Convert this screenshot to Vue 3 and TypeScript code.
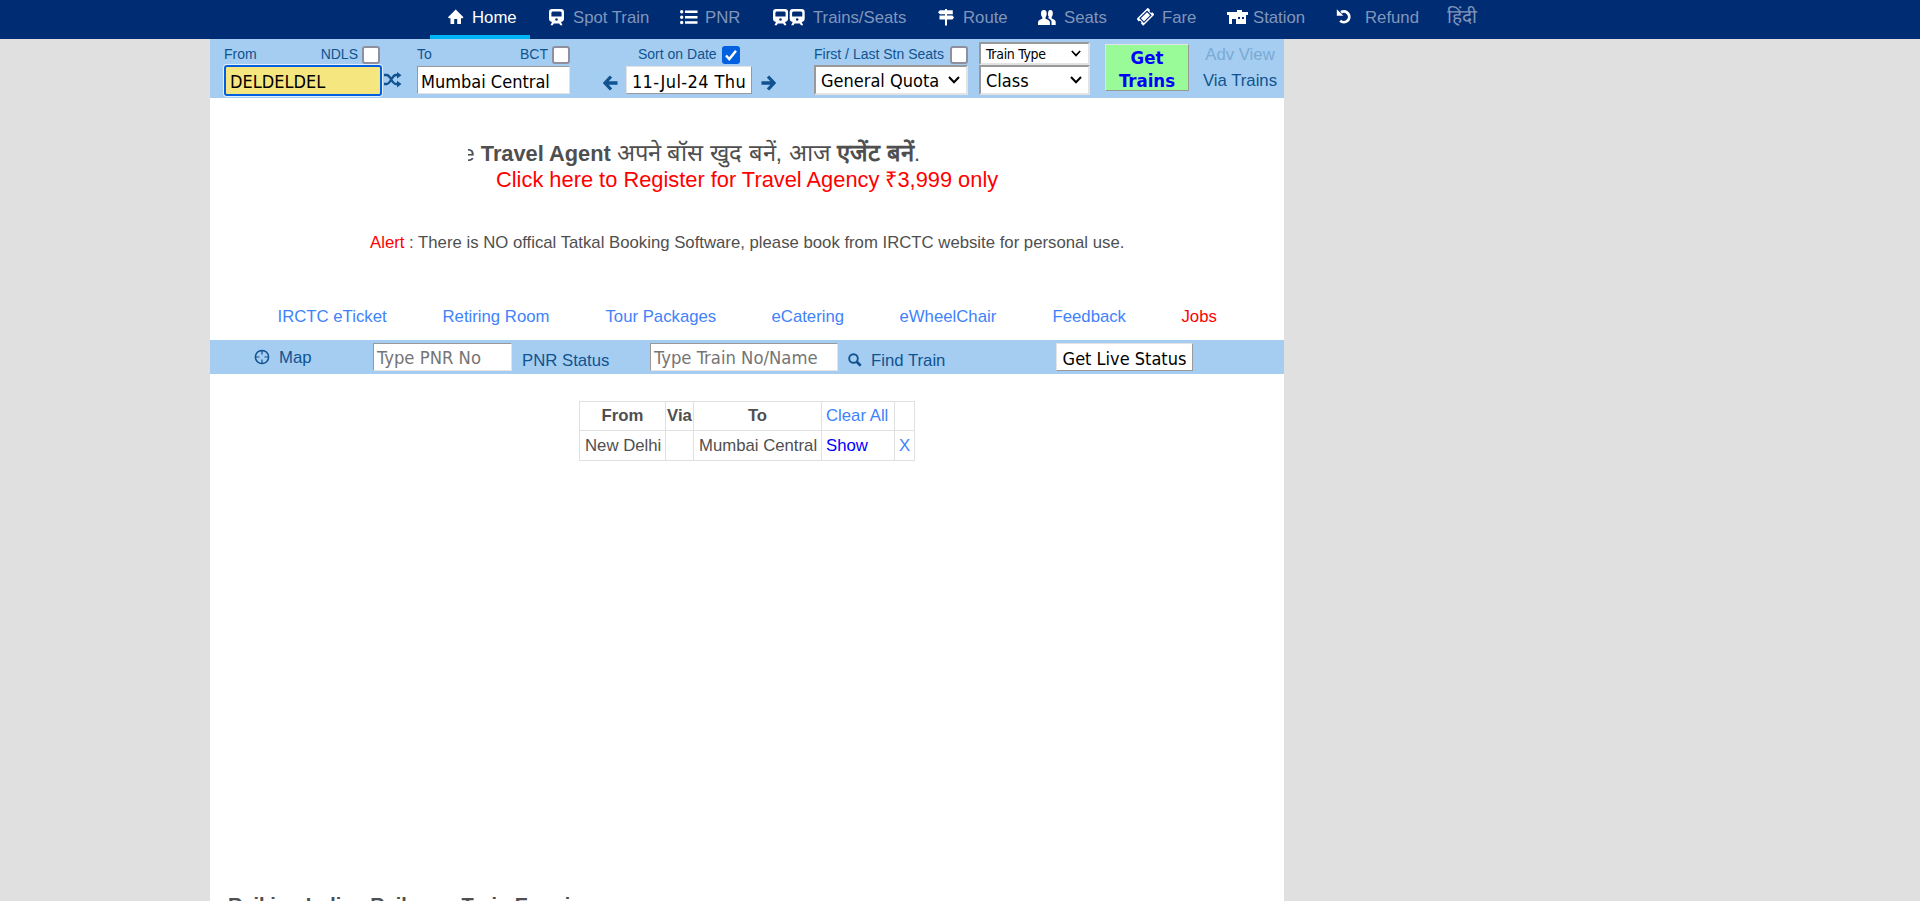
<script setup lang="ts">
interface NavItem { label: string; icon: string; w: number; iw: number; gap: number }

const nav: NavItem[] = [
  { label: 'Home', icon: 'home', w: 101, iw: 16, gap: 8 },
  { label: 'Spot Train', icon: 'train', w: 131, iw: 16, gap: 8 },
  { label: 'PNR', icon: 'list', w: 93, iw: 18, gap: 7 },
  { label: 'Trains/Seats', icon: 'trains', w: 165, iw: 32, gap: 8 },
  { label: 'Route', icon: 'sign', w: 100, iw: 16, gap: 9 },
  { label: 'Seats', icon: 'users', w: 99, iw: 18, gap: 8 },
  { label: 'Fare', icon: 'ticket', w: 90, iw: 17, gap: 8 },
  { label: 'Station', icon: 'station', w: 109, iw: 21, gap: 5 },
  { label: 'Refund', icon: 'undo', w: 111, iw: 16, gap: 13 },
  { label: 'हिंदी', icon: '', w: 70, iw: 0, gap: 0 },
]
const links: { label: string; w: number }[] = [
  { label: 'IRCTC eTicket', w: 165 },
  { label: 'Retiring Room', w: 163 },
  { label: 'Tour Packages', w: 166 },
  { label: 'eCatering', w: 128 },
  { label: 'eWheelChair', w: 153 },
  { label: 'Feedback', w: 129 },
  { label: 'Jobs', w: 60 },
]
</script>

<template>
  <div class="page">
    <nav class="nav">
      <a v-for="(n, i) in nav" :key="n.label" class="nav-item" :class="{ active: i === 0, hindi: !n.icon }" :style="{ width: n.w + 'px' }">
        <svg v-if="n.icon" class="nav-icon" :style="{ width: n.iw + 'px', marginRight: n.gap + 'px' }" :viewBox="`0 0 ${n.iw} 18`" height="18">
          <path v-if="n.icon === 'home'" d="M7.7 1.5 15.5 9.2 14.5 10.3H13V16H9.2V11H6.2V16H2.5V10.3H.9L0 9.2Z" />
          <g v-if="n.icon === 'train' || n.icon === 'trains'">
            <path fill-rule="evenodd" d="M3 1H12Q15 1 15 4V10.5Q15 13.5 12 14L13.5 17.2H11.2L10.2 15.5H4.8L3.8 17.2H1.5L3 14Q0 13.5 0 10.5V4Q0 1 3 1ZM3.5 3.5 2.4 4.5V8.5H12.6V4.5L11.5 3.5ZM7.5 10.2A1.3 1.3 0 1 0 7.5 12.8A1.3 1.3 0 1 0 7.5 10.2Z" />
            <path v-if="n.icon === 'trains'" transform="translate(16.7 0)" fill-rule="evenodd" d="M3 1H12Q15 1 15 4V10.5Q15 13.5 12 14L13.5 17.2H11.2L10.2 15.5H4.8L3.8 17.2H1.5L3 14Q0 13.5 0 10.5V4Q0 1 3 1ZM3.5 3.5 2.4 4.5V8.5H12.6V4.5L11.5 3.5ZM7.5 10.2A1.3 1.3 0 1 0 7.5 12.8A1.3 1.3 0 1 0 7.5 10.2Z" />
          </g>
          <path v-if="n.icon === 'list'" d="M0 3.7a1.7 1.7 0 1 0 3.4 0a1.7 1.7 0 1 0-3.4 0M0 9.2a1.7 1.7 0 1 0 3.4 0a1.7 1.7 0 1 0-3.4 0M0 14.5a1.7 1.7 0 1 0 3.4 0a1.7 1.7 0 1 0-3.4 0M5 2.4H17.5V5H5ZM5 8H17.5V10.5H5ZM5 13.3H17.5V15.8H5Z" />
          <path v-if="n.icon === 'sign'" d="M7 1H9V2.2H14.8V6.2H9V7.4H14.5L16 9.4 14.5 11.5H9V17.5H7V11.5H1.5V7.4H7V6.2H1.8L0 4.2 1.8 2.2H7Z" />
          <g v-if="n.icon === 'users'">
            <path d="M5.8 2C8 2 8.8 3.5 8.7 5.7 8.6 7.8 7.9 8.7 7.5 9.4V10.8C9.3 11.6 11.6 12.3 11.9 14V17H0V14C.2 12.3 2.5 11.6 4.3 10.8V9.4C3.8 8.7 3 7.8 3 5.7 3 3.5 3.6 2 5.8 2Z" />
            <path d="M12.3 2C14.4 2 14.9 3.6 14.8 5.6 14.7 7.8 14 8.5 13.6 9.3V10.6C15.3 11.4 17.5 12 17.7 13.8V17H13.5V13.5C13.2 11.8 11.5 11 10.3 10.3 10 9.7 10.8 9 10.9 8.7 10.2 8.2 9.8 7.2 10 5.8 10.1 4 10.3 2 12.3 2Z" />
          </g>
          <g v-if="n.icon === 'ticket'" transform="rotate(-45 8.5 8.8)">
            <path fill-rule="evenodd" d="M.5 4H16.5V7.3A1.5 1.5 0 0 0 16.5 10.3V13.6H.5V10.3A1.5 1.5 0 0 0 .5 7.3ZM3 5.5V12.1H14V5.5ZM4.2 6.6H12.8V11H4.2Z" />
          </g>
          <g v-if="n.icon === 'station'">
            <path d="M10 2H15V4H21V7H0V4H10Z" />
            <path fill-rule="evenodd" d="M2 6H19V16H9V11H5V16H2ZM11 9V11H13V9ZM15 9V11H17V9Z" />
          </g>
          <g v-if="n.icon === 'undo'">
            <path d="M5 4.2A5.4 5.4 0 1 1 4.2 12.8" fill="none" stroke="#fff" stroke-width="2.8" />
            <path d="M.8 1.3V7.7H7.4Z" />
          </g>
        </svg>
        <span>{{ n.label }}</span>
      </a>
    </nav>

    <main class="panel">
      <section class="search">
        <div class="col from">
          <div class="lab"><span>From</span><span class="push">NDLS</span><i class="cb" /></div>
          <div class="field focused">DELDELDEL</div>
        </div>
        <svg class="shuffle" width="18" height="16" viewBox="0 0 18 16"><path d="M0 3H2.5C7 3 7.5 12 12 12H14M0 12H2.5C7 12 7.5 3 12 3H14" fill="none" stroke="#105390" stroke-width="2.4" /><path d="M13 0 17.5 3.2 13 6.5ZM13 8.8 17.5 12.1 13 15.5Z" fill="#105390" /></svg>
        <div class="col to">
          <div class="lab"><span>To</span><span class="push">BCT</span><i class="cb" /></div>
          <div class="field">Mumbai Central</div>
        </div>
        <div class="col date">
          <div class="lab centred"><span>Sort on Date</span><i class="cb on"><svg width="18" height="18" viewBox="0 0 18 18"><path d="M4 9.5 7.3 13 14 4.8" fill="none" stroke="#fff" stroke-width="2.5" /></svg></i></div>
          <div class="daterow">
            <svg width="15" height="16" viewBox="0 0 15 16"><path d="M8 1.5 2 8 8 14.5M2 8H14.5" fill="none" stroke="#105390" stroke-width="3.3" /></svg>
            <div class="field btn datebtn">11-Jul-24 Thu</div>
            <svg width="15" height="16" viewBox="0 0 15 16"><path d="M7 1.5 13 8 7 14.5M13 8H.5" fill="none" stroke="#105390" stroke-width="3.3" /></svg>
          </div>
        </div>
        <div class="col quota">
          <div class="lab"><span>First / Last Stn Seats</span><i class="cb push" /></div>
          <div class="select"><span>General Quota</span><svg width="12" height="8" viewBox="0 0 12 8"><path d="M1 1 6 6.3 11 1" fill="none" stroke="#000" stroke-width="2" /></svg></div>
        </div>
        <div class="col types">
          <div class="select small"><span>Train Type</span><svg width="10" height="7" viewBox="0 0 12 8"><path d="M1 1 6 6.3 11 1" fill="none" stroke="#000" stroke-width="2" /></svg></div>
          <div class="select"><span>Class</span><svg width="12" height="8" viewBox="0 0 12 8"><path d="M1 1 6 6.3 11 1" fill="none" stroke="#000" stroke-width="2" /></svg></div>
        </div>
        <div class="get"><span>Get</span><span>Trains</span></div>
        <div class="views"><span class="dim">Adv View</span><span>Via Trains</span></div>
      </section>

      <section class="promo">
        <div class="marquee"><span>e <b>Travel Agent</b> <span class="hi">अपने बॉस खुद बनें, आज <b>एजेंट बनें</b></span>.</span></div>
        <div class="register">Click here to Register for Travel Agency ₹3,999 only</div>
      </section>

      <p class="alert"><span class="red">Alert</span> : There is NO offical Tatkal Booking Software, please book from IRCTC website for personal use.</p>

      <div class="links">
        <a v-for="l in links" :key="l.label" :style="{ width: l.w + 'px' }" :class="{ red: l.label === 'Jobs' }">{{ l.label }}</a>
      </div>

      <section class="strip">
        <svg class="compass" width="16" height="16" viewBox="0 0 16 16"><circle cx="8" cy="8" r="6.6" fill="none" stroke="#105390" stroke-width="1.5" /><path d="M8 1V5.5M8 10.5V15M1 8H5.5M10.5 8H15" stroke="#105390" stroke-width="1.2" /></svg>
        <span class="map">Map</span>
        <div class="field ph pnr">Type PNR No</div>
        <span class="pnr-status">PNR Status</span>
        <div class="field ph trainno">Type Train No/Name</div>
        <svg class="mag" width="14" height="14" viewBox="0 0 14 14"><circle cx="5.5" cy="5.5" r="4.3" fill="none" stroke="#105390" stroke-width="1.9" /><path d="M8.5 8.5 12.7 12.7" stroke="#105390" stroke-width="2.7" /></svg>
        <span class="find">Find Train</span>
        <div class="field btn live">Get Live Status</div>
      </section>

      <table class="recent">
        <colgroup><col class="c1"><col class="c2"><col class="c3"><col class="c4"><col class="c5"></colgroup>
        <tbody>
          <tr><th>From</th><th>Via</th><th>To</th><td class="link">Clear All</td><td /></tr>
          <tr><td>New Delhi</td><td /><td>Mumbai Central</td><td class="show">Show</td><td class="link">X</td></tr>
        </tbody>
      </table>

      <h2 class="heading">Raiking Indian Railways Train Enquiry</h2>
    </main>
  </div>
</template>

<style>
html, body { margin: 0; overflow: hidden; }
</style>

<style scoped>
.page { height: 901px; overflow: hidden; background: #e0e0e0; font-family: "Liberation Sans", Arial, sans-serif; font-size: 16.74px; color: #4f4f4f; box-sizing: border-box; }
.nav { display: flex; height: 39px; background: #002c74; padding-left: 430px; box-sizing: border-box; }
.nav-item { display: flex; box-sizing: border-box; flex: none; padding-left: 18px; height: 39px; color: #8096ba; line-height: 36px; white-space: nowrap; }
.nav-item.active { color: #fff; background: linear-gradient(#00b3f5, #00b3f5) 0 35px / 100px 4px no-repeat; }
.nav-item.hindi { font-size: 19px; line-height: 34px; padding-left: 18px; }
.nav-icon { flex: none; margin-top: 8px; fill: #fff; }
.panel { display: flex; flex-direction: column; width: 1074px; height: 862px; margin-left: 210px; background: #fff; overflow: hidden; }
.search { display: flex; flex: none; height: 59px; background: #a4cdf1; color: #105390; padding-left: 14px; }
.col { flex: none; display: flex; flex-direction: column; }
.lab { display: flex; align-items: center; height: 18px; margin-top: 7px; margin-bottom: 2px; font-size: 14px; line-height: 18px; white-space: nowrap; }
.lab > span { margin-top: -2px; }
.push { margin-left: auto; }
.cb { flex: none; box-sizing: border-box; width: 18px; height: 18px; margin-left: 4px; border: 2px solid #8f8f9d; border-radius: 3px; background: #fff; }
.cb.push { margin-left: auto; }
.cb.on { border: 0; background: #0060df; margin-left: 5px; }
.cb svg { display: block; }
.field { box-sizing: border-box; height: 28px; padding-left: 3px; border: 1px solid #999; border-right-color: #e3e3e3; border-bottom-color: #e3e3e3; background: #fff; color: #000; font: 18px/29px "DejaVu Sans Condensed", "Noto Sans", sans-serif; white-space: nowrap; overflow: hidden; }
.field.btn { border-color: #e3e3e3 #999 #999 #e3e3e3; padding-left: 0; text-align: center; }
.field.focused { height: 31px; margin-top: -1px; background: #f6e67f; border: 2px solid #0060df; border-radius: 3px; padding-left: 4px; line-height: 30px; box-shadow: 0 0 0 1px rgba(255, 255, 255, 0.7); }
.from { width: 158px; }
.from .lab { padding-right: 2px; }
.shuffle { flex: none; margin: 33px 15px 0 2px; }
.to { width: 153px; }
.date { width: 175px; margin-left: 32px; }
.centred { padding-left: 36px; }
.daterow { display: flex; align-items: flex-start; }
.daterow svg { margin: 9px 0 0 1px; flex: none; }
.field.datebtn { width: 126px; margin: 0 8px 0 8px; letter-spacing: 0.4px; }
.quota { width: 154px; margin-left: 37px; }
.quota .select { margin-top: -1px; }
.select { box-sizing: border-box; display: flex; align-items: center; justify-content: space-between; height: 30px; padding: 0 6px 0 5px; border: 2px solid #999; border-right-color: #e3e3e3; border-bottom-color: #e3e3e3; background: #fff; color: #000; font: 18px/28px "DejaVu Sans Condensed", "Noto Sans", sans-serif; white-space: nowrap; }
.select > span { padding-top: 2px; }
.select.small > span { padding-top: 1px; }
.select.small { height: 23px; font-size: 14px; line-height: 19px; padding-right: 7px; letter-spacing: -0.3px; }
.types { width: 111px; margin: 3px 0 0 11px; }
.get { box-sizing: border-box; flex: none; width: 84px; height: 47px; margin: 5px 0 0 15px; border: 1px solid; border-color: #e3e3e3 #999 #999 #e3e3e3; background: #98fb98; color: #00f; display: flex; flex-direction: column; align-items: center; font: bold 18.5px/23px "DejaVu Sans Condensed", "Noto Sans", sans-serif; padding-top: 1px; }
.views { flex: none; width: 80px; margin-left: 11px; padding-top: 3px; display: flex; flex-direction: column; align-items: center; line-height: 26px; white-space: nowrap; }
.dim { color: #7aaad3; }
.promo { height: 58px; padding-top: 38px; flex: none; }
.marquee { display: flex; justify-content: flex-end; width: 452px; margin-left: 258px; overflow: hidden; height: 32px; line-height: 34px; font-size: 21.8px; white-space: nowrap; }
.marquee > span { flex: none; }
.hi { font-size: 23.7px; }
.register { margin-left: 286px; font-size: 21.83px; line-height: 26px; margin-top: -1px; color: red; white-space: nowrap; }
.alert { margin: 39px 0 0 160px; line-height: 20px; white-space: nowrap; flex: none; }
.red { color: red !important; }
.links { display: flex; flex: none; height: 20px; line-height: 20px; margin: 54px 0 13px 67.5px; color: #3f82fb; white-space: nowrap; }
.links a { flex: none; }
.strip { display: flex; flex: none; height: 34px; background: #a4cdf1; color: #105390; white-space: nowrap; }
.strip > * { flex: none; }
.strip .field { margin-top: 3px; }
.field.ph { color: #757575; padding-left: 3px; line-height: 28px; font-size: 18.3px; }
.compass { margin: 9px 0 0 44px; }
.map { width: 94px; margin-left: 9px; line-height: 36px; }
.pnr { width: 139px; }
.pnr-status { margin-left: 10px; width: 128px; line-height: 42px; }
.trainno { width: 188px; }
.mag { margin: 13px 0 0 10px; }
.find { margin-left: 9px; width: 185px; line-height: 42px; }
.live { width: 137px; }
.recent { flex: none; width: 336px; margin: 27px 0 0 369px; border-collapse: collapse; table-layout: fixed; }
.recent td, .recent th { box-sizing: border-box; height: 30px; padding: 1px 0 0 5px; border: 1px solid #e0e0e0; line-height: 20px; white-space: nowrap; }
.recent th { padding-left: 0; text-align: center; }
.recent tr:first-child > * { height: 29px; padding-top: 0; }
.recent td.link, .recent td.show { padding-left: 4px; }
.c1 { width: 86px; } .c2 { width: 28px; } .c3 { width: 128px; } .c4 { width: 73px; } .c5 { width: 20px; }
.link { color: #3f82fb; }
.show { color: #00f; }
.heading { margin: 432px 0 0 18px; font-size: 20px; line-height: 24px; white-space: nowrap; }
</style>
